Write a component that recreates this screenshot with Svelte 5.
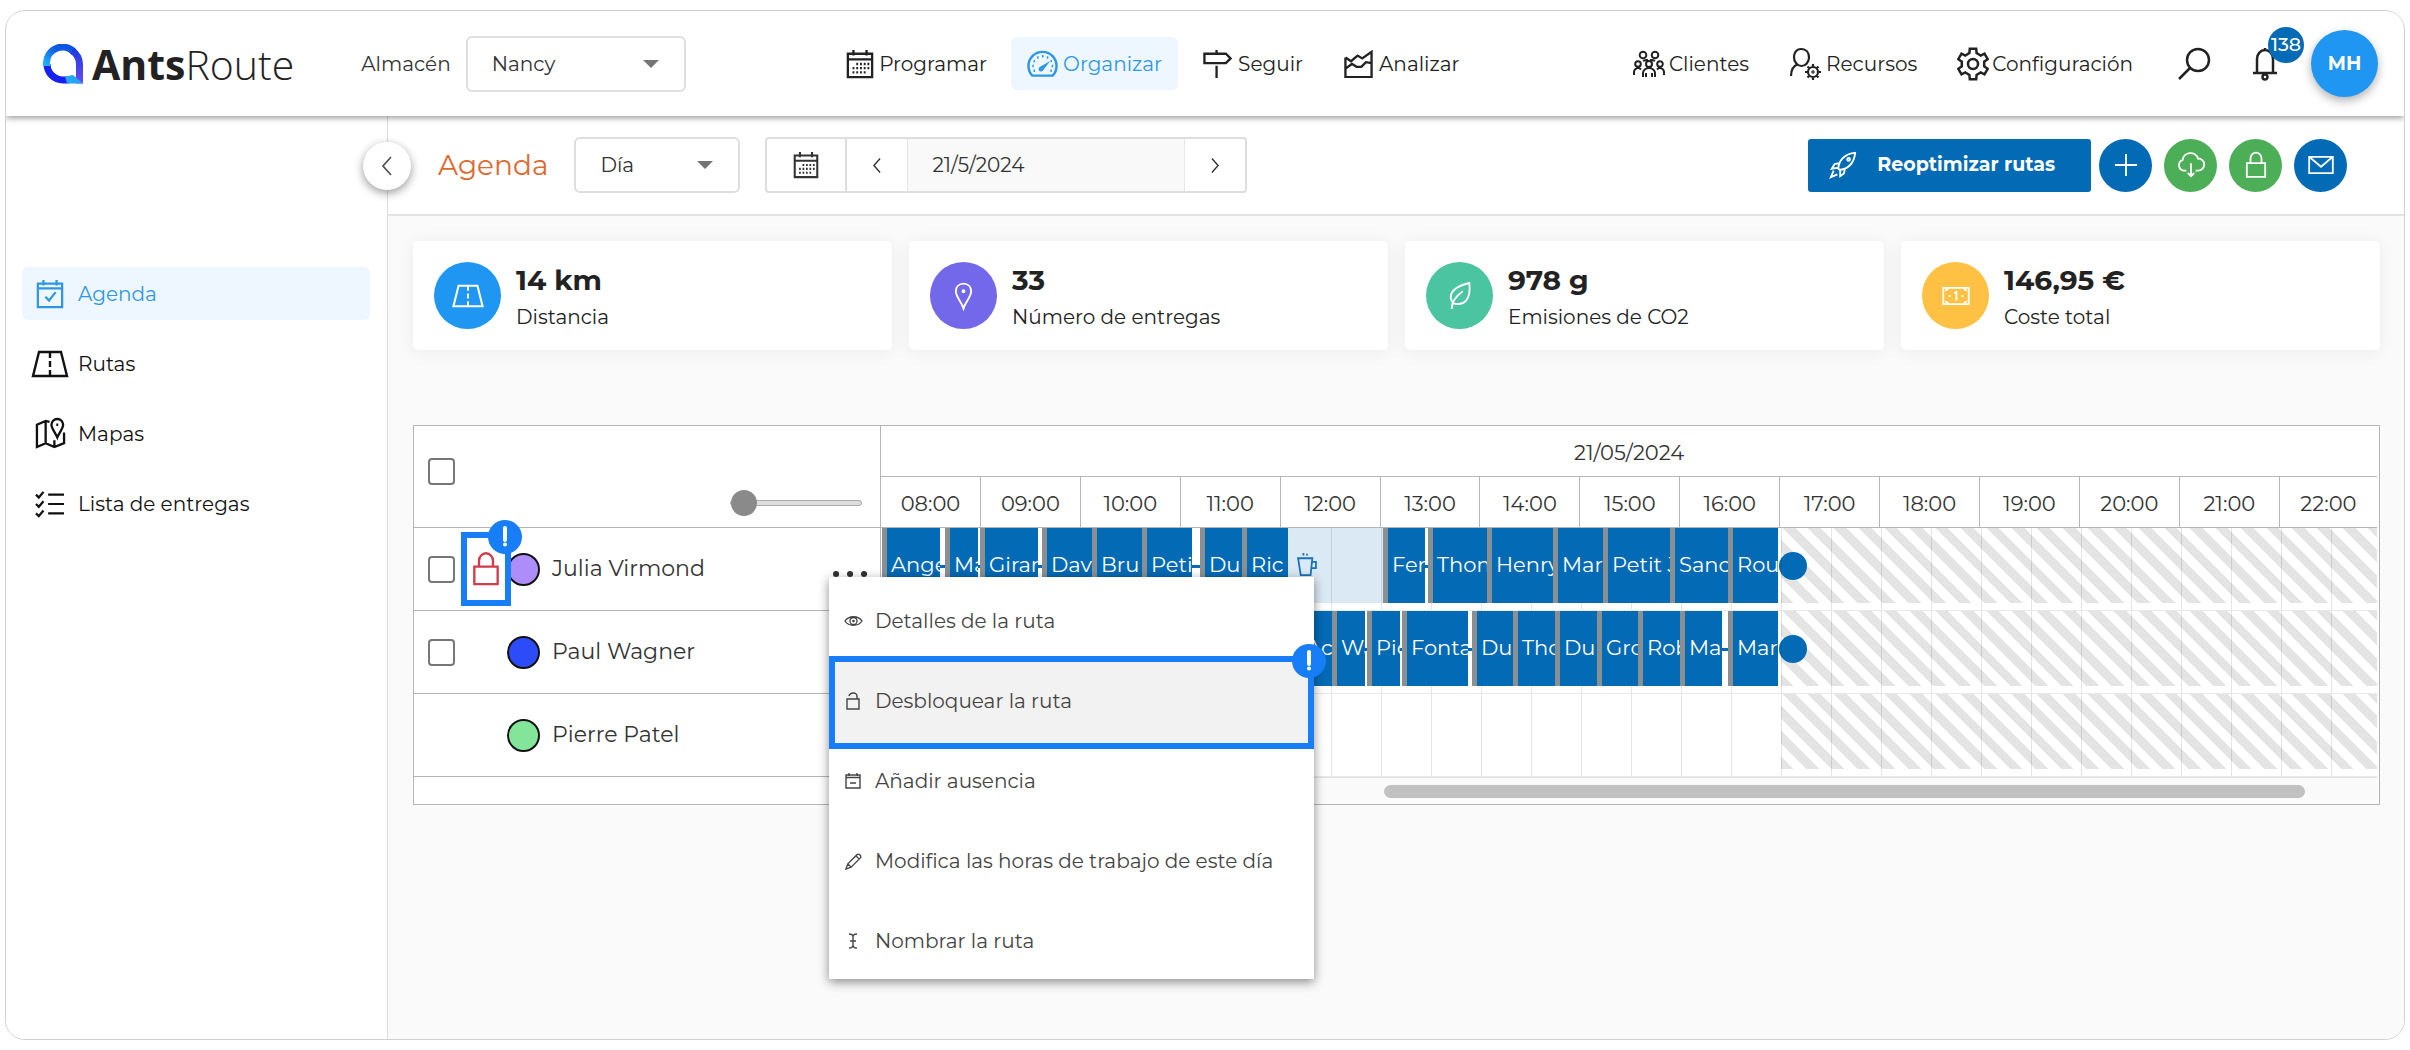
<script>
  // Closed outline of a cog wheel with the given number of teeth.
  function cog(cx, cy, teeth, outer, inner) {
    const step = (Math.PI * 2) / teeth;
    const at = (r, a) => `${(cx + r * Math.sin(a)).toFixed(1)} ${(cy - r * Math.cos(a)).toFixed(1)}`;
    const points = [];
    for (let i = 0; i < teeth; i++) {
      const a = i * step;
      points.push(at(inner, a - step * 0.3), at(outer, a - step * 0.2), at(outer, a + step * 0.2), at(inner, a + step * 0.3));
    }
    return `M${points.join('L')}Z`;
  }

  const circle = (cx, cy, r) => `M${cx - r} ${cy}a${r} ${r} 0 1 0 ${2 * r} 0a${r} ${r} 0 1 0 ${-2 * r} 0Z`;

  const gaugeTicks = [-120, -90, -60, -30, 0, 30, 60, 90, 120]
    .map((deg) => {
      const a = (deg * Math.PI) / 180;
      return `M${(15.5 + 10 * Math.sin(a)).toFixed(1)} ${(16 - 10 * Math.cos(a)).toFixed(1)}h1.500`;
    })
    .join('');

  const icons = {
    calendar: { box: '0 0 30 32', d: 'M2 5H28V30H2ZM2 11H28M8 1V7M22 1V7M11 16h2M15 16h2M19 16h2M23 16h2M7 20.5h2M11 20.5h2M15 20.5h2M19 20.5h2M23 20.5h2M7 25h2M11 25h2M15 25h2M19 25h2' },
    gauge: { box: '0 0 32 28', d: `M5.5 26H26.5A14.5 14.5 0 1 0 5.5 26Z${gaugeTicks}`, fill: 'M13 17L24 11L17 20A2.6 2.6 0 1 1 13 17Z' },
    signpost: { box: '0 0 32 30', d: 'M2 4H25L30 9L25 14H2ZM15 0V4M15 17V30' },
    area: { box: '0 0 32 30', d: 'M2 8V29H30V2L20 9L15 6L8 12L2 8M2 20L9 15L14 18L19 18L24 13L30 14' },
    people: { box: '0 0 34 28', d: circle(11, 5, 3.3) + circle(23, 5, 3.3) + circle(17, 14, 3) + circle(6, 14, 2.8) + circle(28, 14, 2.8) + 'M2 25V22a4 4 0 0 1 7-2.500M32 25V22a4 4 0 0 0-7-2.500M11 27V23a6 5 0 0 1 12 0V27M14 27V23M20 27V23M11 11a6 4 0 0 1 5-1M23 11a6 4 0 0 0-5-1' },
    userGear: { box: '0 0 34 34', d: 'M12 2C17.500 2 20 6 20 10.500S16.500 19 12.500 19S5 15 5 10.500S7 2 12 2ZM2 29C2 23 4 19 9 17' + circle(24, 25, 5) + 'M24 17V20M24 30V33M16 25H19M29 25H32M18.500 19.500L20.500 21.500M27.500 28.500L29.500 30.500M18.500 30.500L20.500 28.500M27.500 21.500L29.500 19.500' + circle(24, 25, 0.6) },
    gear: { box: '0 0 32 34', d: cog(16, 17, 6, 15.5, 11.5) + circle(16, 17, 5) },
    search: { box: '0 0 34 34', d: circle(21, 13, 11) + 'M13 21L2 32' },
    bell: { box: '0 0 26 34', d: 'M5 27V12a8 9 0 0 1 16 0V27M1 26H25M13 1V4' + circle(13, 30, 2.5) },
    rocket: { box: '0 0 30 30', d: 'M10 19C10 11 16 3 28 2C27 14 19 20 11 20ZM11 13L6 14L3 19L9 18M17 19L16 24L12 27L12 21M5 21L2 28L9 25' + circle(21, 9, 1.5) },
    plus: { box: '0 0 26 26', d: 'M13 1V25M1 13H25' },
    cloud: { box: '0 0 32 28', d: 'M11 20H8A6 6 0 0 1 7 8.500A8.500 8.500 0 0 1 23.500 7A6.500 6.500 0 0 1 24 20H21M16 12V26M12.500 22.500L16 26L19.500 22.500' },
    lock: { box: '0 0 24 30', d: 'M2 13H22V28H2ZM6 13V8a6 6.500 0 0 1 12 0V13' },
    mail: { box: '0 0 30 22', d: 'M2 2H28V20H2ZM2 2L15 13L28 2' },
    agenda: { box: '0 0 30 32', d: 'M2 5H28V30H2ZM2 10H28M8 1V7M22 1V7M10 19L14 23L21 14' },
    road: { box: '0 0 38 28', d: 'M8 2H30L36 26H2ZM19 3V8M19 11V17M19 20V26' },
    map: { box: '0 0 32 34', d: 'M15 5L11 4L2 8V31L11 27L20 31L30 27V16M11 4V27M20 24V31M23 2C26.500 2 29 5 29 8C29 12 25 16 23 21C21 16 17 12 17 8C17 5 19.500 2 23 2ZM22 8h2' },
    checklist: { box: '0 0 32 30', d: 'M14 5H31M14 15H31M14 25H31M1 5L4 8L9 2M1 15L4 18L9 12M1 25L4 28L9 22' },
    pin: { box: '0 0 22 30', d: 'M11 2C16 2 19 5.500 19 10C19 16 13 21 11 28C9 21 3 16 3 10C3 5.500 6 2 11 2Z' + circle(11, 10, 1) },
    leaf: { box: '0 0 28 32', d: 'M5 30C5 22 10 16 17 11M7 24C1 17 3 7 24 2C26 18 20 27 7 24Z' },
    banknote: { box: '0 0 32 22', d: 'M2 2H30V20H2ZM4 5a4 4 0 0 0 3-2M28 5a4 4 0 0 1-3-2M4 17a4 4 0 0 1 3 2M28 17a4 4 0 0 0-3 2M14 8L16.500 6.500V16M8 11h2M22 11h2' },
    eye: { box: '0 0 20 14', d: 'M1 7C5 1 15 1 19 7C15 13 5 13 1 7Z' + circle(10, 7, 3.7) + circle(10, 7, 0.7) },
    unlock: { box: '0 0 16 20', d: 'M2 8H14V18H2ZM4 5C5 1 12 1 12 5V8' },
    calendarMinus: { box: '0 0 16 18', d: 'M1 3H15V16H1ZM1 5.500H15M4 1V4M12 1V4M5 11H11' },
    pencil: { box: '0 0 18 18', d: 'M1 17L3 11.500L13 1.500C15 0.500 17.500 3 16.500 5L6.500 15ZM3 11.500L6.500 15M11.500 3L15 6.500' },
    ibeam: { box: '0 0 12 18', d: 'M2 2C4 2 6 3 6 5C6 3 8 2 10 2M6 5V13M2 16C4 16 6 15 6 13C6 15 8 16 10 16M3 9H9' },
    cup: { box: '0 0 24 28', d: 'M2 7H18L16 26H5ZM17 11H22V18H17M8 1V4M12 2V4' },
    left: { box: '0 0 12 22', d: 'M10 2L2 11L10 20' },
    right: { box: '0 0 12 22', d: 'M2 2L10 11L2 20' }
  };

  const mainNav = [
    { icon: 'calendar', label: 'Programar' },
    { icon: 'gauge', label: 'Organizar', active: true },
    { icon: 'signpost', label: 'Seguir' },
    { icon: 'area', label: 'Analizar' }
  ];
  const sideNav = [
    { icon: 'agenda', label: 'Agenda', active: true },
    { icon: 'road', label: 'Rutas' },
    { icon: 'map', label: 'Mapas' },
    { icon: 'checklist', label: 'Lista de entregas' }
  ];
  const toolsNav = [
    { icon: 'people', label: 'Clientes' },
    { icon: 'userGear', label: 'Recursos' },
    { icon: 'gear', label: 'Configuración' }
  ];
  const actions = [
    { icon: 'plus', label: 'Añadir', tone: 'blue' },
    { icon: 'cloud', label: 'Descargar', tone: 'green' },
    { icon: 'lock', label: 'Bloquear', tone: 'green' },
    { icon: 'mail', label: 'Enviar', tone: 'blue' }
  ];
  const stats = [
    { icon: 'road', value: '14 km', label: 'Distancia', tone: 'sky' },
    { icon: 'pin', value: '33', label: 'Número de entregas', tone: 'violet' },
    { icon: 'leaf', value: '978 g', label: 'Emisiones de CO2', tone: 'mint' },
    { icon: 'banknote', value: '146,95 €', label: 'Coste total', tone: 'amber' }
  ];
  const menu = [
    { icon: 'eye', label: 'Detalles de la ruta' },
    { icon: 'unlock', label: 'Desbloquear la ruta', marked: true },
    { icon: 'calendarMinus', label: 'Añadir ausencia' },
    { icon: 'pencil', label: 'Modifica las horas de trabajo de este día' },
    { icon: 'ibeam', label: 'Nombrar la ruta' }
  ];

  const hours = Array.from({ length: 15 }, (_, i) => `${String(i + 8).padStart(2, '0')}:00`);

  // Stops are [name, start, end] in hundredths of an hour after 08:00.
  const SPAN = 1496;
  const pct = (v) => (v / SPAN) * 100;
  const routes = [
    {
      driver: 'Julia Virmond', colour: 'lilac', selectable: true, locked: true, pause: [407, 502],
      stops: [['Ange', 1, 59], ['Ma', 64, 97], ['Girar', 99, 157], ['Dav', 161, 211], ['Bru', 211, 261], ['Peti', 261, 311], ['Du', 319, 361], ['Ric', 361, 407],
        ['Fer', 502, 544], ['Thom', 547, 606], ['Henry', 606, 672], ['Mar', 672, 722], ['Petit J', 722, 789], ['Sanc', 789, 847], ['Rou', 847, 897]]
    },
    {
      driver: 'Paul Wagner', colour: 'royal', selectable: true,
      stops: [['Ac', 416, 451], ['Wa', 451, 484], ['Pic', 486, 519], ['Fonta', 521, 587], ['Du', 591, 632], ['Tho', 632, 674], ['Du', 674, 716], ['Gro', 716, 757], ['Rob', 757, 799], ['Ma', 799, 841], ['Mar', 847, 897]]
    },
    { driver: 'Pierre Patel', colour: 'lime', selectable: false, stops: [] }
  ];
</script>

{#snippet icon(name)}
  <svg class="icon {name}" viewBox={icons[name].box} aria-hidden="true">
    <path d={icons[name].d} />
    {#if icons[name].fill}<path class="solid" d={icons[name].fill} />{/if}
  </svg>
{/snippet}

{#snippet alertBadge()}
  <span class="alert" aria-hidden="true">
    <svg viewBox="0 0 34 34"><path d="M17 8V20M17 24.500V24.600" /></svg>
  </span>
{/snippet}

<div class="app">
  <header>
    <div class="lead">
      <a class="brand" href="#inicio" aria-label="AntsRoute">
        <svg class="mark" viewBox="0 0 40 40" aria-hidden="true">
          <defs>
            <linearGradient id="ring-left" x1="0" y1="1" x2="1" y2="0">
              <stop offset="0" stop-color="#21b6f6" />
              <stop offset="0.6" stop-color="#0d5fe4" />
              <stop offset="1" stop-color="#0d4fe0" />
            </linearGradient>
            <linearGradient id="ring-right" x1="0" y1="0" x2="0" y2="1">
              <stop offset="0" stop-color="#1f3be0" />
              <stop offset="1" stop-color="#6a4bf2" />
            </linearGradient>
          </defs>
          <path d="M4 20A16 16 0 0 0 20 36H26" stroke="#1620f0" />
          <path d="M3.500 22V19.500A16 16 0 0 1 31 8" stroke="url(#ring-left)" />
          <path d="M29 6.500Q36.500 12 36.500 20V39.500" stroke="url(#ring-right)" />
          <path d="M22 32.500L30 31L40 39.500H24Z" fill="#25a5f2" />
        </svg>
        <span class="wordmark"><b>Ants</b>Route</span>
      </a>
      <label class="field">
        <span>Almacén</span>
        <span class="picker wide">
          <select><option>Nancy</option></select>
          <svg viewBox="0 0 16 8" aria-hidden="true"><path d="M0 0H16L8 8Z" /></svg>
        </span>
      </label>
    </div>
    <nav aria-label="Principal">
      {#each mainNav as item}
        <a href="#{item.label}" class:active={item.active}>{@render icon(item.icon)}{item.label}</a>
      {/each}
    </nav>
    <div class="tools">
      <div class="links">
        {#each toolsNav as item}
          <a href="#{item.label}">{@render icon(item.icon)}{item.label}</a>
        {/each}
      </div>
      <button class="plain" aria-label="Buscar">{@render icon('search')}</button>
      <button class="plain notices" aria-label="Notificaciones">{@render icon('bell')}<span class="count">138</span></button>
      <button class="avatar">MH</button>
    </div>
  </header>

  <div class="body">
    <aside>
      <button class="collapse" aria-label="Contraer menú">{@render icon('left')}</button>
      <nav aria-label="Secciones">
        {#each sideNav as item}
          <a href="#{item.label}" class:active={item.active}><span class="slot">{@render icon(item.icon)}</span>{item.label}</a>
        {/each}
      </nav>
    </aside>

    <main>
      <div class="toolbar">
        <h1>Agenda</h1>
        <span class="picker">
          <select aria-label="Periodo"><option>Día</option></select>
          <svg viewBox="0 0 16 8" aria-hidden="true"><path d="M0 0H16L8 8Z" /></svg>
        </span>
        <div class="dates">
          <button class="open" aria-label="Calendario">{@render icon('calendar')}</button>
          <button aria-label="Día anterior">{@render icon('left')}</button>
          <input type="text" value="21/5/2024" aria-label="Fecha" />
          <button aria-label="Día siguiente">{@render icon('right')}</button>
        </div>
        <div class="actions">
          <button class="primary">{@render icon('rocket')}Reoptimizar rutas</button>
          {#each actions as action}
            <button class="round {action.tone}" aria-label={action.label}>{@render icon(action.icon)}</button>
          {/each}
        </div>
      </div>

      <div class="content">
        <section class="stats">
          {#each stats as stat}
            <article>
              <span class="disc {stat.tone}">{@render icon(stat.icon)}</span>
              <div>
                <strong>{stat.value}</strong>
                <span>{stat.label}</span>
              </div>
            </article>
          {/each}
        </section>

        <div class="planner">
          <table>
            <colgroup>
              <col class="who" />
              {#each hours.slice(1) as _}<col />{/each}
              <col class="last" />
            </colgroup>
            <thead>
              <tr>
                <td class="corner" rowspan="2">
                  <div>
                    <input type="checkbox" aria-label="Seleccionar todo" />
                    <input type="range" min="0" max="10" value="0" aria-label="Zoom" />
                  </div>
                </td>
                <th class="day" colspan="15">21/05/2024</th>
              </tr>
              <tr>
                {#each hours as hour}<th class="hour">{hour}</th>{/each}
              </tr>
            </thead>
            <tbody>
              {#each routes as route}
                <tr>
                  <th class="driver" scope="row">
                    <div class="person">
                      <span class="tick">
                        {#if route.selectable}<input type="checkbox" aria-label={route.driver} />{/if}
                      </span>
                      <span class="state">
                        {#if route.locked}<span class="frame">{@render icon('lock')}{@render alertBadge()}</span>{/if}
                      </span>
                      <span class="dot {route.colour}"></span>
                      <span class="name">{route.driver}</span>
                      {#if route.locked}
                        <div class="more">
                          <button class="dots" aria-label="Opciones">
                            <svg viewBox="0 0 34 6"><path d="M3 3h.1M17 3h.1M31 3h.1" /></svg>
                          </button>
                          <div class="menu">
                            {#each menu as item}
                              <button class:marked={item.marked}>
                                <span class="slot">{@render icon(item.icon)}</span>{item.label}
                                {#if item.marked}{@render alertBadge()}{/if}
                              </button>
                            {/each}
                          </div>
                        </div>
                      {/if}
                    </div>
                  </th>
                  <td colspan="15" class="lane">
                    <div class="track">
                      <div class="closed" style:left="{pct(900)}%"></div>
                      {#if route.stops.length}
                        <div class="line" style:left="{pct(route.stops[0][1])}%" style:width="{pct(897 - route.stops[0][1])}%"></div>
                      {/if}
                      {#if route.pause}
                        <div class="pause" style:left="{pct(route.pause[0])}%" style:width="{pct(route.pause[1] - route.pause[0])}%">{@render icon('cup')}</div>
                      {/if}
                      {#each route.stops as [name, start, end]}
                        <div class="stop" style:left="{pct(start)}%" style:width="{pct(end - start)}%">{name}</div>
                      {/each}
                      {#if route.stops.length}<div class="finish" style:left="{pct(898)}%"></div>{/if}
                      <div class="grid">
                        {#each { length: 29 } as _, i}<i style:left="{pct((i + 1) * 50)}%"></i>{/each}
                      </div>
                    </div>
                  </td>
                </tr>
              {/each}
            </tbody>
            <tfoot>
              <tr>
                <td class="foot"></td>
                <td class="scroll" colspan="15"><div></div></td>
              </tr>
            </tfoot>
          </table>
        </div>
      </div>
    </main>
  </div>
</div>

<style>
  :global(body) {
    background: #fff;
    color: #333;
    font-family: Montserrat, Inter, 'Open Sans', sans-serif;
    font-size: 20px;
    line-height: 24px;
  }
  * { box-sizing: border-box; }
  button, select, input { font: inherit; color: inherit; margin: 0; }
  button { background: none; border: 0; padding: 0; cursor: pointer; }
  a { color: inherit; text-decoration: none; }

  .icon { display: block; flex: none; width: 28px; height: 30px; fill: none; stroke: currentColor; stroke-width: 2; }
  .icon .solid { fill: currentColor; stroke: none; }

  .app {
    display: flex;
    flex-direction: column;
    min-height: calc(100vh - 20px);
    margin: 10px 5px;
    border: 1px solid #d0d0d0;
    border-radius: 20px;
    overflow: hidden;
  }

  header {
    position: relative;
    z-index: 2;
    display: flex;
    align-items: center;
    justify-content: space-between;
    height: 105px;
    padding: 0 26px 0 37px;
    background: #fff;
    box-shadow: 0 2px 6px rgba(0, 0, 0, 0.4);
  }
  .lead, .brand, .field, .tools, .links, header nav { display: flex; align-items: center; }
  .lead { gap: 67px; }
  .brand { gap: 9px; }
  .mark { width: 40px; height: 40px; fill: none; stroke-width: 7; }
  .mark path[fill] { stroke: none; }
  .wordmark { font: 300 41px/48px 'Open Sans', sans-serif; color: #222; }
  .wordmark b { font-weight: 700; }
  .field { gap: 15px; }
  .picker { position: relative; display: block; width: 166px; height: 56px; }
  .picker.wide { width: 220px; }
  .picker select {
    width: 100%;
    height: 100%;
    padding: 0 24px;
    appearance: none;
    background: #fff;
    border: 2px solid #dedede;
    border-radius: 6px;
  }
  .picker svg { position: absolute; right: 27px; top: 24px; width: 16px; height: 8px; fill: #757575; pointer-events: none; }

  header nav { gap: 8px; margin-left: 4px; }
  header a { color: #222; }
  header nav a, .links a { display: flex; align-items: center; gap: 5px; height: 53px; padding: 0 16px; border-radius: 6px; }
  header nav a.active { background: #eef7ff; color: #2e97e5; }
  .links { gap: 8px; }
  .links a { gap: 3px; }
  header .icon { stroke-width: 2.5; }
  .gauge, .area, .signpost { width: 31px; height: 28px; }
  .people { width: 34px; height: 28px; }
  header .people { stroke-width: 2; }
  .userGear { width: 34px; height: 34px; }
  header .userGear { stroke-width: 2.2; }
  .gear { width: 32px; height: 34px; }
  .plain { margin-left: 28px; color: #222; }
  .plain .search { width: 34px; height: 34px; }
  .plain .bell { height: 34px; }
  .notices { position: relative; margin-left: 40px; }
  .count {
    position: absolute;
    left: 17px;
    bottom: 18px;
    width: 36px;
    height: 36px;
    border-radius: 50%;
    background: #036ab5;
    color: #fff;
    font-size: 19px;
    line-height: 36px;
    font-weight: 500;
  }
  .avatar {
    width: 67px;
    height: 67px;
    margin-left: 32px;
    border-radius: 50%;
    background: #1e96f2;
    color: #fff;
    font-weight: 700;
    font-size: 19px;
    box-shadow: 0 4px 10px rgba(0, 0, 0, 0.3);
  }

  .body { display: flex; flex: 1; }
  aside { position: relative; flex: none; width: 382px; padding: 151px 17px 0 16px; background: #fff; border-right: 1px solid #ddd; }
  aside nav { display: grid; gap: 17px; }
  aside a { display: flex; align-items: center; gap: 7px; height: 53px; padding-left: 7px; border-radius: 6px; color: #111; }
  aside a .slot { display: grid; place-items: center; width: 42px; }
  aside .icon { stroke-width: 2.4; }
  aside a.active { background: #eef7ff; color: #2e97e5; }
  aside .road { width: 38px; height: 28px; }
  aside .map { width: 31px; height: 33px; }
  aside .checklist { width: 30px; height: 28px; }
  .collapse {
    position: absolute;
    z-index: 1;
    right: -24px;
    top: 26px;
    display: grid;
    place-items: center;
    width: 48px;
    height: 48px;
    border-radius: 50%;
    background: #fff;
    color: #555;
    box-shadow: 0 3px 10px rgba(0, 0, 0, 0.4);
  }
  .icon.left, .icon.right { width: 12px; height: 22px; stroke-width: 1.8; }

  main { flex: 1; min-width: 0; background: #fafafa; }
  .toolbar {
    display: flex;
    align-items: center;
    height: 100px;
    padding: 0 57px 0 50px;
    background: #fff;
    border-bottom: 2px solid #e2e2e2;
  }
  h1 { margin: 0 26px 0 0; font-size: 28px; line-height: 36px; font-weight: 400; color: #dd6b30; }
  .dates { display: flex; height: 56px; margin-left: 25px; border: 2px solid #dedede; border-radius: 4px; }
  .dates button { display: grid; place-items: center; width: 60px; }
  .dates .open { width: 80px; border-right: 2px solid #dedede; }
  .dates .calendar { width: 26px; height: 28px; stroke-width: 2.4; }
  .dates .left, .dates .right { height: 17px; }
  .dates input { width: 278px; padding: 0 24px; border: solid #e6e6e6; border-width: 0 1px; background: #f9f9f9; }
  .actions { display: flex; align-items: center; gap: 12px; margin-left: auto; color: #fff; }
  .primary {
    display: flex;
    align-items: center;
    gap: 20px;
    height: 53px;
    margin-right: -4px;
    padding: 0 36px 0 21px;
    border-radius: 3px;
    background: #036ab5;
    font-size: 19px;
    font-weight: 700;
  }
  .round { display: grid; place-items: center; width: 53px; height: 53px; border-radius: 50%; }
  .blue { background: #036ab5; }
  .green { background: #4caf57; }
  .plus { width: 24px; height: 24px; }
  .cloud { width: 30px; height: 26px; }
  .round .lock { width: 22px; height: 28px; }
  .mail { width: 28px; height: 20px; }

  .content { padding: 25px 24px 25px 25px; }
  .stats { display: grid; grid-template-columns: repeat(4, 1fr); gap: 17px; }
  article {
    display: flex;
    gap: 15px;
    height: 109px;
    padding: 21px;
    border-radius: 5px;
    background: #fff;
    color: #222;
    box-shadow: 0 2px 16px rgba(60, 60, 90, 0.08);
  }
  article div { display: grid; align-content: center; row-gap: 7px; }
  article strong { font-size: 28px; line-height: 36px; font-weight: 700; }
  .disc { display: grid; place-items: center; flex: none; width: 67px; height: 67px; border-radius: 50%; color: #fff; }
  .sky { background: #1e96f2; }
  .violet { background: #7367ea; }
  .mint { background: #4bc4a1; }
  .amber { background: #fec144; }
  .disc .road { width: 34px; height: 24px; stroke-width: 2.4; }
  .disc .pin { width: 21px; height: 30px; }
  .disc .leaf { width: 26px; height: 30px; }
  .disc .banknote { width: 30px; height: 20px; }

  .planner { margin-top: 75px; padding-right: 2px; border: 1px solid #b5b5b5; background: #fff; }
  table { width: 100%; table-layout: fixed; border-spacing: 0; }
  th, td { padding: 0; font-weight: 400; }
  col.who { width: 467px; }
  col.last { width: 97px; }
  .corner, .driver { border-right: 1px solid #b5b5b5; border-bottom: 1px solid #b5b5b5; }
  .corner div { display: flex; align-items: center; justify-content: space-between; height: 100px; padding: 0 18px 10px 14px; }
  .corner input[type='range'] { margin-top: 62px; }
  .day { height: 51px; border-bottom: 1px solid #b5b5b5; }
  .hour { height: 51px; border-right: 1px solid #b5b5b5; border-bottom: 1px solid #b5b5b5; }
  .hour:last-child { border-right: 0; }
  .day, .hour { padding-top: 3px; font-size: 21px; }

  input[type='checkbox'] { display: block; width: 27px; height: 27px; appearance: none; border: 2px solid #777; border-radius: 4px; background: #fff; }
  input[type='range'] { width: 132px; height: 26px; appearance: none; background: none; }
  input[type='range']::-webkit-slider-runnable-track { height: 6px; border: 1px solid #aaa; border-radius: 3px; background: #ddd; }
  input[type='range']::-webkit-slider-thumb { appearance: none; width: 26px; height: 26px; margin-top: -11px; border-radius: 50%; background: #8a8a8a; }

  .person { display: flex; align-items: center; height: 82px; padding: 0 13px 0 14px; text-align: left; }
  .tick { width: 33px; }
  .state { width: 46px; }
  .frame { position: relative; z-index: 1; display: grid; place-items: center; width: 50px; height: 74px; border: 6px solid #187ef7; color: #cf3c4a; }
  .frame .lock { width: 28px; height: 38px; }
  .alert { position: absolute; width: 34px; height: 34px; border-radius: 50%; background: #187ef7; }
  .alert svg { display: block; fill: none; stroke: #fff; stroke-width: 4; stroke-linecap: round; }
  .frame .alert { right: -17px; top: -18px; }
  .dot { width: 33px; height: 33px; border: 2px solid #111; border-radius: 50%; }
  .lilac { background: #ad8dfa; }
  .royal { background: #2b4cf8; }
  .lime { background: #83e59a; }
  .name { margin-left: 12px; font-size: 22px; }
  .more { position: relative; margin-left: auto; width: 34px; }
  .dots { display: block; width: 34px; height: 6px; margin-top: 10px; }
  .dots svg { display: block; fill: none; stroke: #333; stroke-width: 6; stroke-linecap: round; }
  .menu {
    position: absolute;
    z-index: 3;
    left: -4px;
    top: 16px;
    width: 485px;
    padding-bottom: 2px;
    background: #fff;
    color: #444;
    box-shadow: 0 3px 10px rgba(0, 0, 0, 0.45);
  }
  .menu button { position: relative; display: flex; align-items: center; width: 100%; height: 80px; padding: 8px 0 0 10px; white-space: nowrap; }
  .menu .slot { display: grid; place-items: center; width: 28px; margin-right: 8px; }
  .menu .icon { stroke-width: 1.4; }
  .menu .eye { width: 19px; height: 14px; }
  .menu .unlock { width: 16px; height: 20px; }
  .menu .calendarMinus { width: 16px; height: 18px; }
  .menu .pencil { width: 17px; height: 17px; }
  .menu .ibeam { width: 12px; height: 18px; }
  .menu .marked { z-index: 1; }
  .menu .marked::before { content: ''; position: absolute; z-index: -1; inset: -1px 0 -12px; border: 6px solid #187ef7; background: #f2f2f2; }
  .marked .alert { right: -12px; top: -13px; }

  .lane { border-bottom: 1px solid #e8e8e8; }
  .track { position: relative; height: 82px; overflow: hidden; }
  .grid { position: absolute; inset: 0; pointer-events: none; z-index: 0; }
  .grid i { position: absolute; top: 0; bottom: 0; width: 1px; background: rgba(0, 0, 0, 0.1); }
  .closed { position: absolute; top: 0; right: 0; height: 75px; background: repeating-linear-gradient(45deg, #e4e4e4 0 9px, #fff 9px 18px); }
  .line { position: absolute; top: 37px; height: 3px; background: #036ab5; }
  .pause { position: absolute; top: 0; height: 75px; padding: 24px 0 0 7px; background: #dbe9f4; color: #1673b9; }
  .cup { width: 24px; height: 25px; }
  .stop {
    position: absolute;
    z-index: 1;
    top: 0;
    height: 75px;
    padding-left: 4px;
    border-left: 5px solid #8a8f92;
    background: #036ab5;
    color: #fff;
    font-size: 21px;
    line-height: 73px;
    text-align: left;
    white-space: nowrap;
    overflow: hidden;
  }
  .finish { position: absolute; top: 24px; width: 28px; height: 28px; border-radius: 50%; background: #036ab5; }
  .foot { height: 27px; }
  .scroll { background: #fafafa; border-top: 1px solid #e0e0e0; }
  .scroll div { width: 61.6%; height: 13px; margin: 0 auto 0 33.6%; border-radius: 7px; background: #c1c1c1; }
</style>
